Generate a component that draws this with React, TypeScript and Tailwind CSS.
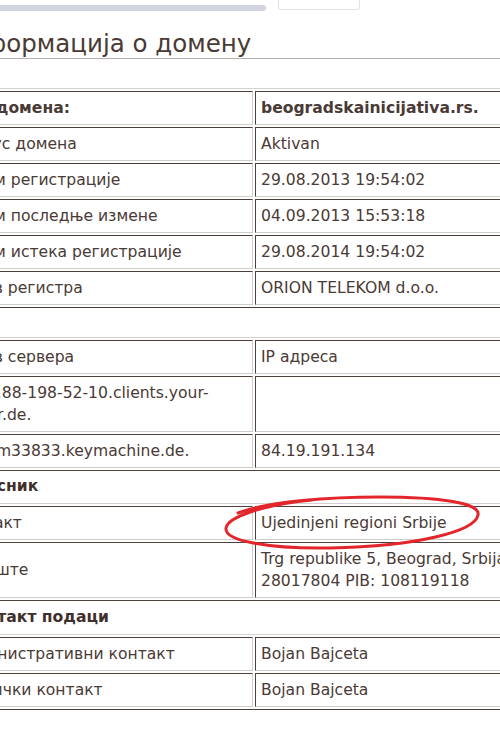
import React from "react";

interface Row {
  label: React.ReactNode;
  value: React.ReactNode;
  bold?: boolean;
}

const cellCls =
  "border border-t-[#4f403b] border-l-[#4f403b] border-b-[#cdcdcd] border-r-[#cdcdcd] px-[5px] py-[5px] leading-[22px] align-middle text-left";

const InfoTable: React.FC<{ rows: Row[] }> = ({ rows }) => (
  <table className="border-separate border-spacing-[2px] border border-t-[#d2d2d2] border-l-[#d2d2d2] border-b-[#4f403b] border-r-[#4f403b] w-[620px]">
    <tbody>
      {rows.map((row, i) => (
        <tr key={i}>
          <td className={`${cellCls} w-[305px] ${row.bold ? "font-bold" : ""}`}>{row.label}</td>
          <td className={`${cellCls} ${row.bold ? "font-bold" : ""}`}>{row.value}</td>
        </tr>
      ))}
    </tbody>
  </table>
);

const SectionTitle: React.FC<{ children?: React.ReactNode; h: string }> = ({ children, h }) => (
  <div className={`${h} flex items-center pl-[18px] font-bold text-[#3f302c]`}>{children}</div>
);

export default function App() {
  return (
    <div className="relative w-[500px] h-[750px] overflow-hidden bg-white text-[15.6px] text-[#4a3a35] font-['DejaVu_Sans',Verdana,sans-serif]">
      <div className="-ml-[55px]">
        <div className="h-[14px] flex items-start">
          <div className="mt-[5px] h-[6px] w-[321px] rounded-r-[3px] bg-[#d3d5df]" />
          <div className="ml-[12px] h-[10px] w-[82px] rounded-b-[3px] border border-t-0 border-[#e2e2e2]" />
        </div>
        <div className="h-[45px] pt-[16px] pl-[6px] border-b border-[#b5aeac] text-[24.5px] leading-[28px] text-[#4a3a35]">
          Информација о домену
        </div>
        <div className="mt-[29px]">
          <InfoTable
            rows={[
              { label: "Име домена:", value: "beogradskainicijativa.rs.", bold: true },
              { label: "Статус домена", value: "Aktivan" },
              { label: "Датум регистрације", value: "29.08.2013 19:54:02" },
              { label: "Датум последње измене", value: "04.09.2013 15:53:18" },
              { label: "Датум истека регистрације", value: "29.08.2014 19:54:02" },
              { label: "Назив регистра", value: "ORION TELEKOM d.o.o." },
            ]}
          />
        </div>
        <SectionTitle h="h-[29px]" />
        <InfoTable
          rows={[
            { label: "Назив сервера", value: "IP адреса" },
            {
              label: (
                <>
                  static.88-198-52-10.clients.your-
                  <br />
                  server.de.
                </>
              ),
              value: "",
            },
            { label: "ns2.km33833.keymachine.de.", value: "84.19.191.134" },
          ]}
        />
        <SectionTitle h="h-[32px]">Власник</SectionTitle>
        <InfoTable
          rows={[
            { label: "Контакт", value: "Ujedinjeni regioni Srbije" },
            {
              label: "Седиште",
              value: (
                <>
                  Trg republike 5, Beograd, Srbija, MB:
                  <br />
                  28017804 PIB: 108119118
                </>
              ),
            },
          ]}
        />
        <SectionTitle h="h-[33px]">Контакт подаци</SectionTitle>
        <InfoTable
          rows={[
            { label: "Административни контакт", value: "Bojan Bajceta" },
            { label: "Технички контакт", value: "Bojan Bajceta" },
          ]}
        />
      </div>
      <svg
        className="absolute left-0 top-0 pointer-events-none"
        width="500"
        height="750"
        viewBox="0 0 500 750"
        fill="none"
      >
        <path
          d="M238 513 C270 501 330 497 380 497 C440 497 481 503 478 515 C475 531 420 546 330 548 C270 549 224 541 226 528 C228 517 262 505 312 500"
          stroke="#e3262b"
          strokeWidth="3"
          strokeLinecap="round"
        />
      </svg>
    </div>
  );
}
